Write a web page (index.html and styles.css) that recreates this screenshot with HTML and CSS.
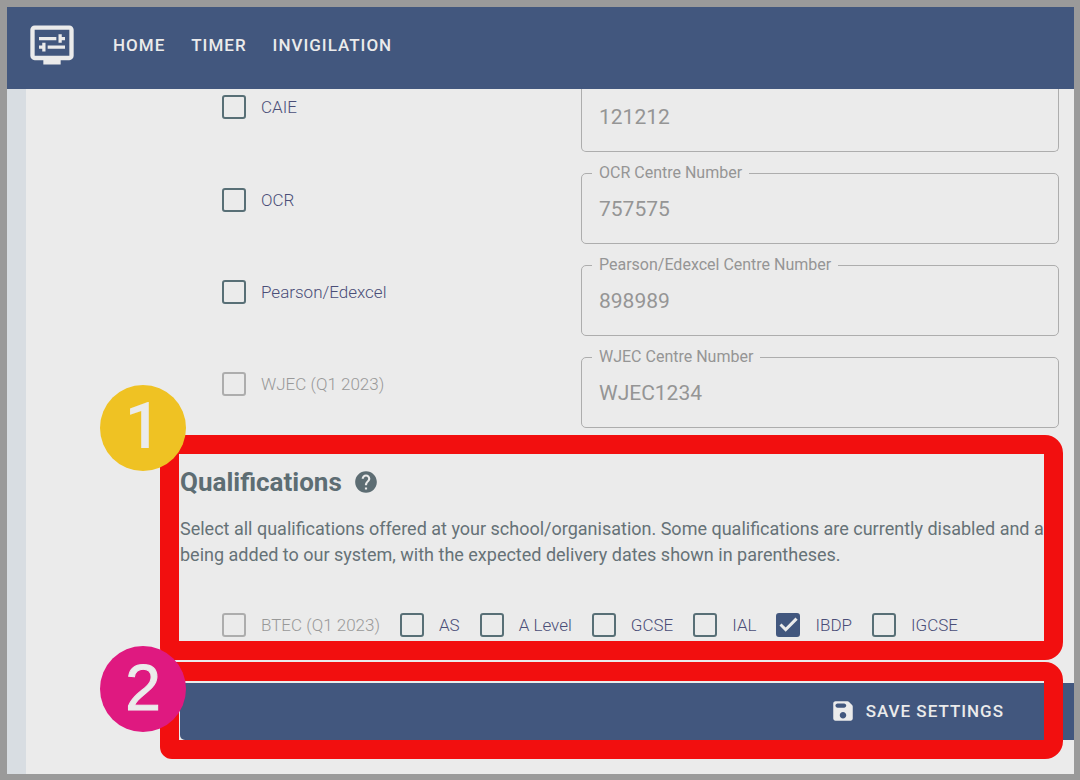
FILE: index.html
```html
<!DOCTYPE html>
<html lang="en">
<head>
<meta charset="utf-8">
<title>Settings</title>
<link rel="stylesheet" href="styles.css">
</head>
<body>
<div class="app">
  <header class="topbar">
    <svg class="logo" viewBox="0 0 24 24" aria-hidden="true"><path d="M20 3H4c-1.11 0-2 .89-2 2v12c0 1.1.89 2 2 2h4v2h8v-2h4c1.1 0 2-.9 2-2V5c0-1.11-.9-2-2-2zm0 14H4V5h16v12z"/><path d="M6 8.25h8v1.5H6zM16.5 9.75H18v-1.5h-1.5V7H15v4h1.5zM10 12.25h8v1.5h-8zM7.5 15H9v-4H7.5v1.25H6v1.5h1.5z"/></svg>
    <nav class="nav">
      <a href="#home">HOME</a>
      <a href="#timer">TIMER</a>
      <a href="#invigilation">INVIGILATION</a>
    </nav>
  </header>
  <div class="body">
    <aside class="rail"></aside>
    <main class="content">
      <section class="boards">
        <div class="board board-cut">
          <label class="check"><input type="checkbox"><span>CAIE</span></label>
          <div class="field"><input type="text" value="121212" aria-label="CAIE" disabled></div>
        </div>
        <div class="board">
          <label class="check"><input type="checkbox"><span>OCR</span></label>
          <fieldset class="field"><legend><label for="ocr">OCR Centre Number</label></legend><input id="ocr" type="text" value="757575" disabled></fieldset>
        </div>
        <div class="board">
          <label class="check"><input type="checkbox"><span>Pearson/Edexcel</span></label>
          <fieldset class="field"><legend><label for="pearson">Pearson/Edexcel Centre Number</label></legend><input id="pearson" type="text" value="898989" disabled></fieldset>
        </div>
        <div class="board">
          <label class="check is-disabled"><input type="checkbox" disabled><span>WJEC (Q1 2023)</span></label>
          <fieldset class="field"><legend><label for="wjec">WJEC Centre Number</label></legend><input id="wjec" type="text" value="WJEC1234" disabled></fieldset>
        </div>
      </section>

      <section class="qualifications">
        <h2>Qualifications
          <svg class="help" viewBox="0 0 24 24" aria-hidden="true"><path d="M12 2C6.48 2 2 6.48 2 12s4.48 10 10 10 10-4.48 10-10S17.52 2 12 2zm1 17h-2v-2h2v2zm2.07-7.75l-.9.92C13.45 12.9 13 13.5 13 15h-2v-.5c0-1.1.45-2.1 1.17-2.83l1.24-1.26c.37-.36.59-.86.59-1.41 0-1.1-.9-2-2-2s-2 .9-2 2H8c0-2.21 1.79-4 4-4s4 1.79 4 4c0 .88-.36 1.68-.93 2.25z"/></svg>
        </h2>
        <p>Select all qualifications offered at your school/organisation. Some qualifications are currently disabled and are<br>being added to our system, with the expected delivery dates shown in parentheses.</p>
        <div class="options">
          <label class="check is-disabled"><input type="checkbox" disabled><span>BTEC (Q1 2023)</span></label>
          <label class="check"><input type="checkbox"><span>AS</span></label>
          <label class="check"><input type="checkbox"><span>A Level</span></label>
          <label class="check"><input type="checkbox"><span>GCSE</span></label>
          <label class="check"><input type="checkbox"><span>IAL</span></label>
          <label class="check"><input type="checkbox" checked><span>IBDP</span></label>
          <label class="check"><input type="checkbox"><span>IGCSE</span></label>
        </div>
        <div class="callout"><span class="marker marker-one">1</span></div>
      </section>

      <section class="actions">
        <button class="save" type="button">
          <svg viewBox="0 0 24 24" aria-hidden="true"><path d="M17.59 3.59c-.38-.38-.89-.59-1.42-.59H5c-1.11 0-2 .9-2 2v14c0 1.1.9 2 2 2h14c1.1 0 2-.9 2-2V7.83c0-.53-.21-1.04-.59-1.41l-2.82-2.83zM12 19c-1.66 0-3-1.34-3-3s1.34-3 3-3 3 1.34 3 3-1.34 3-3 3zm1-10H7c-1.1 0-2-.9-2-2s.9-2 2-2h6c1.1 0 2 .9 2 2s-.9 2-2 2z"/></svg>
          <span>SAVE SETTINGS</span>
        </button>
        <div class="callout"><span class="marker marker-two">2</span></div>
      </section>
    </main>
  </div>
</div>
</body>
</html>
```
FILE: styles.css
```css
* { box-sizing: border-box; }

body {
  margin: 0;
  font-family: Roboto, "Liberation Sans", sans-serif;
  background: #9a9a9a;
}

.app {
  display: flex;
  flex-direction: column;
  min-height: 100vh;
  border: solid #9a9a9a;
  border-width: 7px 6px 6px 7px;
  background: #ebebeb;
}

.topbar {
  display: flex;
  align-items: center;
  gap: 35px;
  height: 82px;
  padding: 0 19px 6px;
  background: #42577e;
  color: #ebebeb;
}

.logo { width: 52px; height: 52px; fill: currentColor; }

.nav { display: flex; gap: 26px; }

.nav a {
  color: inherit;
  text-decoration: none;
  font-size: 17px;
  font-weight: 500;
  letter-spacing: 1px;
}

.body { display: flex; flex: 1; }

.rail { width: 19px; background: #d8dde2; }

.content {
  flex: 1;
  min-width: 0;
  overflow: hidden;
  padding-left: 154px;
}

.boards {
  display: flex;
  flex-direction: column;
  gap: 11px;
  padding-right: 15px;
}

.board {
  display: grid;
  grid-template-columns: 401fr 478fr;
}

.board .check { padding: 25px 0 0 42px; align-self: start; }
.board-cut .check { padding-top: 6px; }

.check {
  display: flex;
  align-items: center;
  gap: 15px;
  color: #4a4e78;
  font-size: 17px;
  font-weight: 300;
  line-height: 24px;
  white-space: nowrap;
}

.check input {
  appearance: none;
  flex: none;
  width: 24px;
  height: 24px;
  margin: 0;
  border: 2px solid #586f76;
  border-radius: 3px;
}

.check input:checked { border-color: #42577e; background: #42577e; }

.check input:checked::after {
  content: "";
  display: block;
  width: 20px;
  height: 20px;
  background: #ebebeb;
  clip-path: polygon(5% 53%, 15% 42%, 36% 63%, 85% 13%, 96% 24%, 36% 84%);
}

.check.is-disabled { color: #999; }
.check.is-disabled input { border-color: #adadad; }

.field {
  min-width: 0;
  height: 81px;
  margin: 0;
  padding: 0 10px;
  border: 1px solid #adadad;
  border-radius: 5px;
  color: #959595;
}

.field legend {
  height: 20px;
  padding: 0 7px;
  font-size: 16px;
  line-height: 20px;
}

.field input {
  display: block;
  width: 100%;
  height: 32px;
  margin-top: 10px;
  padding: 0 7px;
  border: 0;
  background: transparent;
  color: inherit;
  font: 400 21px/32px Roboto, "Liberation Sans", sans-serif;
}

.board-cut .field {
  height: 63px;
  padding-top: 2px;
  border-top: 0;
  border-radius: 0 0 5px 5px;
}

.qualifications {
  position: relative;
  padding-top: 38px;
  color: #5d6d73;
}

.qualifications h2 {
  display: flex;
  align-items: center;
  gap: 11px;
  margin: 0;
  font-size: 26px;
  font-weight: 700;
  line-height: 32px;
}

.help { width: 26px; height: 26px; fill: currentColor; }

.qualifications p {
  margin: 18px 0 0;
  color: #667277;
  font-size: 18px;
  line-height: 26px;
  white-space: nowrap;
}

.options {
  display: flex;
  gap: 20px;
  padding: 45px 0 23px 42px;
}

.actions {
  position: relative;
  padding: 23px 0 34px;
}

.save {
  display: flex;
  align-items: center;
  justify-content: flex-end;
  gap: 10px;
  width: 100%;
  height: 57px;
  padding: 0 70px 1px 0;
  border: 0;
  border-radius: 5px 0 0 5px;
  background: #42577e;
  color: #ebebeb;
  font: 500 17px/24px Roboto, "Liberation Sans", sans-serif;
  letter-spacing: 1px;
}

.save svg { width: 26px; height: 26px; fill: currentColor; }

.callout {
  position: absolute;
  inset: 7px 11px 0 -20px;
  border: 19px solid #f20f0f;
  border-radius: 12px 18px 18px 12px;
  pointer-events: none;
}

.actions .callout { inset: 2px 11px 15px -20px; }

.marker {
  position: absolute;
  top: -69px;
  left: -79px;
  width: 86px;
  height: 86px;
  border-radius: 50%;
  color: #ebebeb;
  font-size: 64px;
  font-weight: 500;
  line-height: 84px;
  text-align: center;
}

.marker-one { background: #efc223; }

.marker-two {
  top: -35px;
  background: #df1980;
  font-family: "Liberation Sans", Arial, sans-serif;
  font-weight: 400;
  -webkit-text-stroke: 1px #ebebeb;
}
```
